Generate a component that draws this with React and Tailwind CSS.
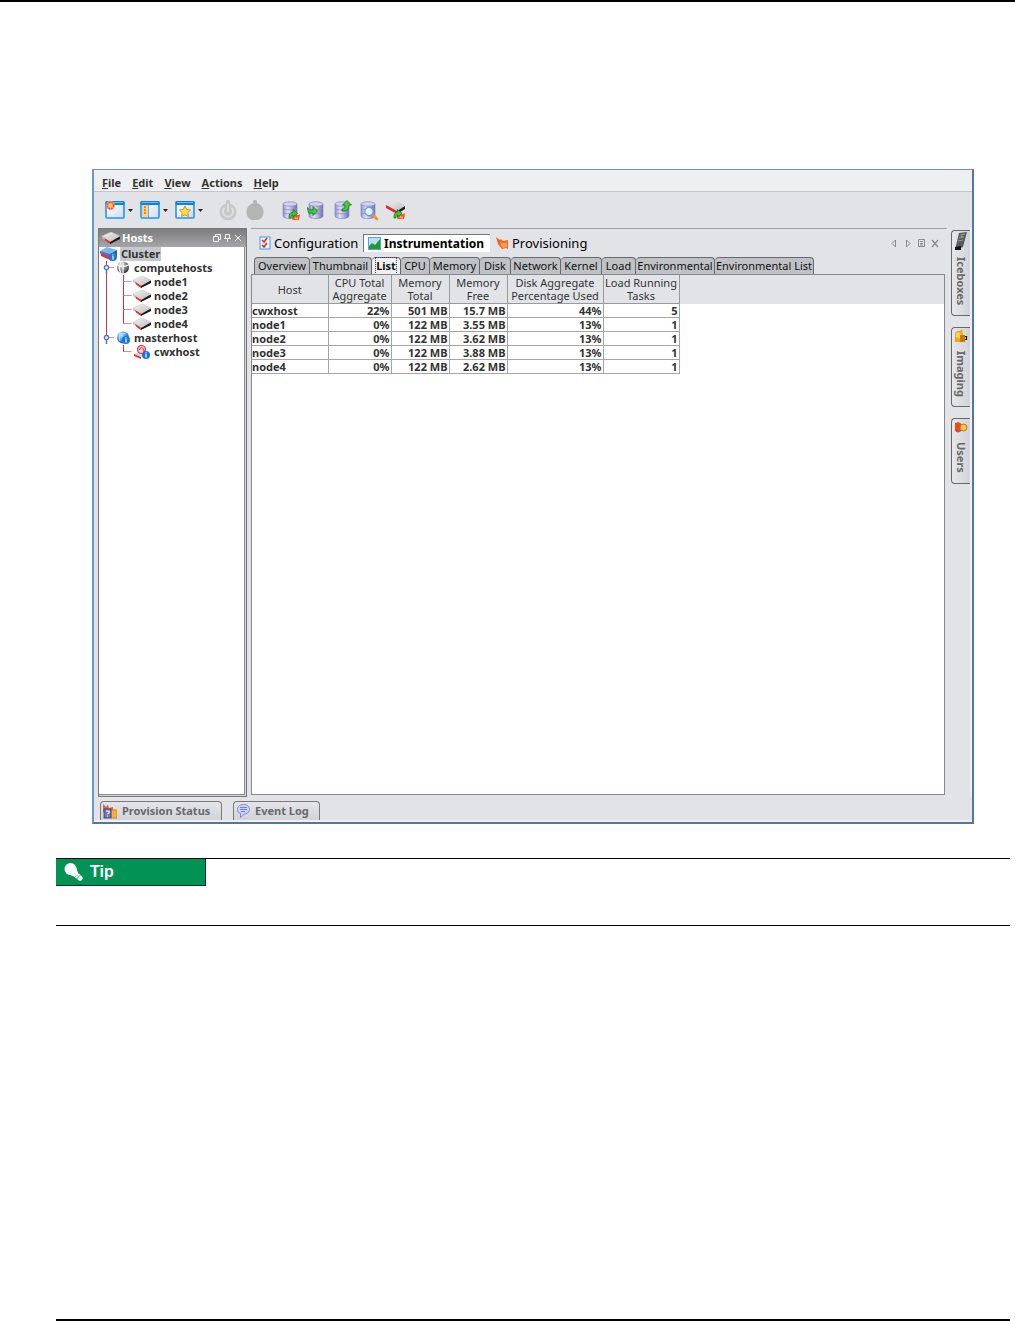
import { useState } from 'react'

const menus = ['File', 'Edit', 'View', 'Actions', 'Help']

const tree = [
  { name: 'computehosts', guides: ['toggle'], icon: 'globe' },
  { name: 'node1', guides: ['line', 'tee'], icon: 'node' },
  { name: 'node2', guides: ['line', 'tee'], icon: 'node' },
  { name: 'node3', guides: ['line', 'tee'], icon: 'node' },
  { name: 'node4', guides: ['line', 'end'], icon: 'node' },
  { name: 'masterhost', guides: ['toggleEnd'], icon: 'globeBlue' },
  { name: 'cwxhost', guides: ['blank', 'end'], icon: 'master' },
]

const subTabs = [
  { label: 'Overview', width: 'w-[56px]' },
  { label: 'Thumbnail', width: 'w-[62px]' },
  { label: 'List', width: 'w-[29px]' },
  { label: 'CPU', width: 'w-[29px]' },
  { label: 'Memory', width: 'w-[50px]' },
  { label: 'Disk', width: 'w-[31px]' },
  { label: 'Network', width: 'w-[50px]' },
  { label: 'Kernel', width: 'w-[41px]' },
  { label: 'Load', width: 'w-[34px]' },
  { label: 'Environmental', width: 'w-[79px]' },
  { label: 'Environmental List', width: 'w-[99px]' },
]

const columns = [
  { lines: ['Host'], width: 'w-[76px]' },
  { lines: ['CPU Total', 'Aggregate'], width: 'w-[63px]' },
  { lines: ['Memory', 'Total'], width: 'w-[58px]' },
  { lines: ['Memory', 'Free'], width: 'w-[58px]' },
  { lines: ['Disk Aggregate', 'Percentage Used'], width: 'w-[96px]' },
  { lines: ['Load Running', 'Tasks'], width: 'w-[76px]' },
]

const rows = [
  ['cwxhost', '22%', '501 MB', '15.7 MB', '44%', '5'],
  ['node1', '0%', '122 MB', '3.55 MB', '13%', '1'],
  ['node2', '0%', '122 MB', '3.62 MB', '13%', '1'],
  ['node3', '0%', '122 MB', '3.88 MB', '13%', '1'],
  ['node4', '0%', '122 MB', '2.62 MB', '13%', '1'],
]

function Gradients() {
  return (
    <svg className="absolute h-0 w-0" aria-hidden="true">
      <defs>
        <linearGradient id="db" x1="0" x2="1" y1="0" y2="0">
          <stop offset="0" stopColor="#8f8fcb" />
          <stop offset="0.35" stopColor="#e2e2fa" />
          <stop offset="1" stopColor="#6c6cae" />
        </linearGradient>
        <linearGradient id="pane" x1="0" x2="1" y1="0" y2="1">
          <stop offset="0" stopColor="#ffffff" />
          <stop offset="1" stopColor="#d3dcf6" />
        </linearGradient>
        <linearGradient id="plate" x1="0" x2="1" y1="0" y2="1">
          <stop offset="0" stopColor="#f4f4f4" />
          <stop offset="1" stopColor="#bcbcbc" />
        </linearGradient>
        <radialGradient id="ball" cx="0.35" cy="0.3" r="0.8">
          <stop offset="0" stopColor="#b8f4ff" />
          <stop offset="0.5" stopColor="#4a90e8" />
          <stop offset="1" stopColor="#3420a8" />
        </radialGradient>
        <radialGradient id="grayBall" cx="0.35" cy="0.3" r="0.8">
          <stop offset="0" stopColor="#e8e8e8" />
          <stop offset="0.5" stopColor="#8c8c8c" />
          <stop offset="1" stopColor="#202020" />
        </radialGradient>
      </defs>
    </svg>
  )
}

function WindowIcon({ kind }) {
  return (
    <svg width="20" height="18" viewBox="0 0 20 18">
      <rect x="1" y="1" width="18" height="16" rx="1" fill="url(#pane)" stroke="#2196f3" strokeWidth="1.6" />
      <rect x="0.5" y="0" width="19" height="4" rx="1" fill="#1280d8" />
      <rect x="2" y="1" width="16" height="1" fill="#6cc0fa" />
      {kind === 'new' && (
        <g>
          <circle cx="5.5" cy="4.5" r="4.5" fill="#f9a070" opacity="0.9" />
          <circle cx="5.5" cy="4.5" r="3.2" fill="none" stroke="#ee4a24" strokeWidth="1.4" strokeDasharray="1.6 1" />
          <circle cx="5.5" cy="4.5" r="2" fill="#ffc24a" />
        </g>
      )}
      {kind === 'side' && (
        <g>
          <rect x="2" y="4" width="6" height="12" fill="#fbd48a" />
          <path d="M8.5 4v12" stroke="#7fa6dc" />
          <path d="M4 6h2M4 9h2M4 12h2" stroke="#e0701c" strokeWidth="1.6" />
        </g>
      )}
      {kind === 'star' && (
        <path d="M10 5l1.800 3.500 3.800.5-2.800 2.700.7 3.800-3.500-1.800-3.500 1.800.7-3.800L4.400 9l3.800-.5z" fill="#ffe046" stroke="#c09018" strokeWidth="0.9" />
      )}
    </svg>
  )
}

function PowerIcon() {
  return (
    <svg width="18" height="21" viewBox="0 0 18 21">
      <circle cx="9" cy="12" r="8.5" fill="#c8c8c9" />
      <rect x="7" y="0" width="4" height="6" rx="1.5" fill="#c8c8c9" />
      <path d="M5.5 8a5 5 0 1 0 7 0" fill="none" stroke="#dfe0e2" strokeWidth="1.8" />
      <path d="M9 4v8" stroke="#e4e4e6" strokeWidth="1.8" />
    </svg>
  )
}

function HaltIcon() {
  return (
    <svg width="18" height="21" viewBox="0 0 18 21">
      <rect x="7" y="0" width="4" height="6" rx="1.5" fill="#b4b4b4" />
      <path d="M9 3c5 0 8.500 4 8.500 9 0 4-2.500 8-6 8h-5c-3.500 0-6-4-6-8 0-5 3.500-9 8.500-9z" fill="#b4b4b4" />
      <path d="M6.500 4.500c2 1 3 1 5 0" fill="none" stroke="#a6a6a6" />
    </svg>
  )
}

function Flame({ x, y }) {
  return (
    <g transform={`translate(${x} ${y})`}>
      <path d="M0 6L1 2l2 1 1-3 1.500 2.500L8 1 7 7H1z" fill="#f0502a" />
      <path d="M2 6l1.500-2.500L5 5l1-1v2.500z" fill="#ffb03c" />
    </g>
  )
}

function DbIcon({ kind }) {
  return (
    <svg width="20" height="21" viewBox="0 0 20 21">
      <path d="M2 4v12c0 3.500 14 3.500 14 0V4z" fill="url(#db)" stroke="#8080bc" strokeWidth="0.6" />
      <ellipse cx="9" cy="4" rx="7" ry="2.200" fill="#d4d4f2" stroke="#8c8cc4" strokeWidth="0.800" />
      <path d="M2 8c0 2.500 14 2.500 14 0M2 12c0 2.500 14 2.500 14 0" fill="none" stroke="#8c8cc4" strokeWidth="0.800" />
      {kind === 'restore' && (
        <g>
          <Flame x={11} y={13} />
          <path d="M8 18c0-4 1-5.500 4-5.500V9.500l4.500 4-4.500 3.500v-2c-1.500 0-2 1-2 3z" fill="#3ccb3c" stroke="#127a12" strokeWidth="0.800" />
        </g>
      )}
      {kind === 'in' && (
        <path d="M.5 7.500l2 2.500H6V6.500l4.500 4.500L6 15.500V13H1.500z" fill="#46d038" stroke="#14801a" strokeWidth="0.900" />
      )}
      {kind === 'out' && (
        <path d="M9 11V9c3 0 3-1 3-4H9.500l4.500-4.500L18.500 5H16c0 4-2 6-7 6z" fill="#46d038" stroke="#14801a" strokeWidth="0.900" />
      )}
      {kind === 'find' && (
        <g>
          <path d="M13 14l5 5" stroke="#f0913a" strokeWidth="2.800" strokeLinecap="round" />
          <circle cx="10" cy="11.500" r="4.200" fill="#d4f2ff" stroke="#6e9cc4" strokeWidth="1.200" />
          <path d="M8 11c0-1 1-2 2-2" stroke="#fff" fill="none" />
        </g>
      )}
    </svg>
  )
}

function NodeIcon() {
  return (
    <svg width="19" height="12" viewBox="0 0 19 12">
      <path d="M0 4l8 6v2L0 6z" fill="#b8c4c8" />
      <path d="M2.500 6l5.500 3.500V12L3 8.500z" fill="#e03434" />
      <path d="M8 9.500L18 4v3l-10 5z" fill="#1a1a1a" />
      <path d="M0 4l9-4 9 4-9.500 5.500z" fill="url(#plate)" stroke="#c4c4c4" strokeWidth="0.5" />
    </svg>
  )
}

function RestoreNodeIcon() {
  return (
    <svg width="21" height="21" viewBox="0 0 21 21">
      <path d="M1 6l9-6 10 5-8 6z" fill="url(#plate)" />
      <path d="M1 5l11 6v3L1 8z" fill="#e02832" />
      <path d="M12 11l8-5v3l-8 5z" fill="#222" />
      <Flame x={12} y={12} />
      <path d="M9 18c0-4 1-6 3.500-6V9.500l4.500 4-4.500 3.500v-2c-1.500 0-1.500 1-1.500 3z" fill="#3ccb3c" stroke="#127a12" strokeWidth="0.800" />
    </svg>
  )
}

function InfoDot({ cx, cy }) {
  return (
    <g>
      <circle cx={cx} cy={cy} r="4" fill="#1478e0" />
      <path d={`M${cx} ${cy - 1}v3.500M${cx} ${cy - 2.8}v1.200`} stroke="#fff" strokeWidth="1.200" />
    </g>
  )
}

function TreeIcon({ kind }) {
  if (kind === 'node') return <NodeIcon />
  if (kind === 'cluster') {
    return (
      <svg width="18" height="14" viewBox="0 0 18 14">
        <path d="M0 4l7-4 10 3-7 4z" fill="#78b8ec" />
        <path d="M0 4l10 3v6L1 9z" fill="#d83a3a" />
        <path d="M0 4l10 3v2L0 6z" fill="#3c80d0" />
        <path d="M10 7l7-4v6l-7 5z" fill="#1d5cae" />
        <InfoDot cx={13} cy={10} />
      </svg>
    )
  }
  if (kind === 'master') {
    return (
      <svg width="19" height="14" viewBox="0 0 19 14">
        <path d="M1 9l6-3 8 2-6 4z" fill="#d8d8d8" />
        <path d="M1 9l7 3v2l-7-3z" fill="#d83030" />
        <circle cx="8.500" cy="4.500" r="4" fill="#f8d0d8" stroke="#d83048" strokeWidth="1.200" />
        <path d="M6.500 5a2 2 0 1 1 3.500 1c1 1 2 0 2-1" fill="none" stroke="#d83048" />
        <InfoDot cx={13} cy={10} />
      </svg>
    )
  }
  const blue = kind === 'globeBlue'
  return (
    <svg width="16" height="14" viewBox="0 0 16 14">
      <circle cx="7" cy="6.500" r="6" fill={blue ? 'url(#ball)' : 'url(#grayBall)'} />
      {!blue && <path d="M7 0v13M1.500 4c3 2 7 2 11 0M5 1c-2 4-2 8 0 11" fill="none" stroke="#f4f4f4" strokeWidth="1.300" />}
      {blue && <path d="M4 2c2 1 5 1 7-.5M4 2c-1 3-1 5 0 8" fill="none" stroke="#b8e4ff" />}
      {blue && <InfoDot cx={10} cy={9} />}
    </svg>
  )
}

function Guide({ kind }) {
  const toggle = kind === 'toggle' || kind === 'toggleEnd'
  const bottom = kind === 'end' ? 7 : 14
  return (
    <svg className="shrink-0" width="17" height="14" viewBox="0 0 17 14">
      {(kind === 'line' || kind === 'toggle') && <path d="M7.500 0v14" stroke="#dc3040" />}
      {kind === 'toggleEnd' && <path d="M7.500 0v7" stroke="#dc3040" />}
      {(kind === 'tee' || kind === 'end') && (
        <g>
          <path d={`M7.500 0v${bottom}`} stroke="#dc3040" />
          <path d="M7.500 6.500h8" stroke="#e88890" />
        </g>
      )}
      {toggle && (
        <g>
          <path d="M9 6.500h6" stroke="#e88890" />
          <path d="M7.500 8v5" stroke="#4f78ac" strokeWidth="1.500" />
          <circle cx="7.500" cy="6.500" r="2.200" fill="#dceafc" stroke="#4f78ac" strokeWidth="1.200" />
        </g>
      )}
    </svg>
  )
}

function MenuLabel({ text }) {
  return (
    <>
      <span className="underline">{text[0]}</span>
      {text.slice(1)}
    </>
  )
}

function Caret() {
  return (
    <button aria-label="More" className="w-[15px] pl-[3px]">
      <svg width="5" height="3" viewBox="0 0 5 3">
        <path d="M0 0h5L2.500 3z" fill="#222" />
      </svg>
    </button>
  )
}

function Toolbar() {
  return (
    <div className="flex h-[37px] items-center border-t border-[#c4c6ca] bg-[#e2e3e7] pl-[11px]">
      <button aria-label="New"><WindowIcon kind="new" /></button>
      <Caret />
      <button aria-label="Layout"><WindowIcon kind="side" /></button>
      <Caret />
      <button aria-label="Favorites"><WindowIcon kind="star" /></button>
      <Caret />
      <div className="flex gap-[9px] pl-[9px]">
        <button aria-label="Power" disabled><PowerIcon /></button>
        <button aria-label="Halt" disabled><HaltIcon /></button>
      </div>
      <div className="flex gap-[6px] pl-[17px]">
        <button aria-label="Restore image"><DbIcon kind="restore" /></button>
        <button aria-label="Import image"><DbIcon kind="in" /></button>
        <button aria-label="Export image"><DbIcon kind="out" /></button>
        <button aria-label="Find image"><DbIcon kind="find" /></button>
        <button aria-label="Restore node"><RestoreNodeIcon /></button>
      </div>
    </div>
  )
}

function HostsPanel() {
  const [selected, setSelected] = useState('Cluster')

  return (
    <aside className="flex w-[149px] shrink-0 flex-col border border-[#77777a] bg-[#d4d5d8]">
      <header className="flex h-[18px] items-center bg-linear-to-b from-[#7c7c7e] to-[#a6a6a8] pl-[3px] text-white">
        <NodeIcon />
        <h2 className="pl-px text-[11px] leading-[14px] font-bold">Hosts</h2>
        <svg className="mr-[4px] ml-auto" width="29" height="9" viewBox="0 0 29 9" fill="none" stroke="#f0f0f0">
          <path d="M2.500 2.500v-2h5v5h-2M.5 2.500h5v5h-5z" />
          <path d="M12.500 .5v4M16.500 .5v4M12.500 .5h4M11 4.500h7M14.500 5v3" />
          <path d="M22 1l6 6M28 1l-6 6" />
        </svg>
      </header>
      <ul className="mr-px mb-px flex-1 border-r border-b border-[#8c8c90] bg-white text-[11px] leading-[14px] font-bold text-[#333]">
        <li>
          <button onClick={() => setSelected('Cluster')} className="flex h-[14px] items-center pl-px">
            <TreeIcon kind="cluster" />
            <span className={`ml-[2px] px-px ${selected === 'Cluster' ? 'bg-[#c6c8cb]' : ''}`}>Cluster</span>
          </button>
        </li>
        {tree.map((item) => (
          <li key={item.name}>
            <button onClick={() => setSelected(item.name)} className="flex h-[14px] items-center">
              {item.guides.map((kind, i) => (
                <Guide key={i} kind={kind} />
              ))}
              <TreeIcon kind={item.icon} />
              <span className={`pl-[2px] ${selected === item.name ? 'bg-[#c6c8cb]' : ''}`}>{item.name}</span>
            </button>
          </li>
        ))}
      </ul>
    </aside>
  )
}

function ViewTabs() {
  return (
    <div className="flex h-[29px] items-center border-t border-[#a2a2a6] pl-[8px] text-[13px] leading-[18px] text-black">
      <button className="flex w-[104px] items-center gap-[3px]">
        <svg width="12" height="14" viewBox="0 0 12 14">
          <rect x="1" y="1" width="10" height="12" fill="#e8f4ff" stroke="#4a9ee0" />
          <path d="M3 4l2 2 3-4M3 9l2 2 3-4" fill="none" stroke="#e02c2c" strokeWidth="1.600" />
        </svg>
        Configuration
      </button>
      <button className="flex h-[18px] w-[127px] items-center gap-[3px] border-t border-l border-[#77777a] bg-white pl-1 text-[12px] font-bold">
        <svg width="13" height="13" viewBox="0 0 13 13">
          <rect x="0.500" y="0.500" width="12" height="12" fill="#bcdcfa" stroke="#58a0e4" />
          <path d="M1 9l3-3 3 2 5-6v10H1z" fill="#1f9c28" />
        </svg>
        Instrumentation
      </button>
      <button className="flex items-center gap-[3px] pl-[6px]">
        <svg width="13" height="13" viewBox="0 0 13 13">
          <path d="M0 0l4 3 1-1 2 2 5-1v9l-2-1-4 1-4-5z" fill="#f4622c" />
          <path d="M4 5l4 1 3-1v5l-4 1-2-2z" fill="#ffa03c" />
        </svg>
        Provisioning
      </button>
      <svg className="mr-[8px] ml-auto" width="48" height="9" viewBox="0 0 48 9" fill="none" stroke="#8a8a8e">
        <path d="M4.500 1v7L1 4.500zM15.500 1v7L19 4.500z" />
        <path d="M27.500 .5h6v7h-6zM29 2.500h3M29 4.500h3M29 6h3" />
        <path d="M41 1l6 7M47 1l-6 7" strokeWidth="1.300" />
      </svg>
    </div>
  )
}

function SubTabs() {
  const [active, setActive] = useState('List')

  return (
    <div role="tablist" className="flex h-[17px] pl-[3px] text-[11px] leading-[15px] text-[#111]">
      {subTabs.map((tab) => (
        <button
          key={tab.label}
          role="tab"
          aria-selected={active === tab.label}
          onClick={() => setActive(tab.label)}
          className={`${tab.width} flex shrink-0 justify-center rounded-t-sm border-t border-r border-[#66686b] whitespace-nowrap first:border-l ${
            active === tab.label ? 'bg-[#eeeff2] font-bold' : 'bg-[#bfc2c5]'
          }`}
        >
          <span className={active === tab.label ? 'outline-1 outline-dotted outline-[#444]' : ''}>{tab.label}</span>
        </button>
      ))}
    </div>
  )
}

function HostTable() {
  return (
    <div className="mr-[2px] flex-1 border border-[#88888c] bg-white">
      {/* header colour runs on past the last column */}
      <div className="bg-linear-to-b from-[#e2e3e7] from-[29px] to-white to-[29px]">
        <table className="table-fixed border-collapse text-[11px] text-[#333]">
          <thead>
            <tr className="h-[28px] leading-[13px]">
              {columns.map((col) => (
                <th key={col.lines.join(' ')} className={`${col.width} border-r border-b border-[#9a9a9e] p-0 pt-px font-normal whitespace-nowrap`}>
                  {col.lines.map((line) => (
                    <div key={line}>{line}</div>
                  ))}
                </th>
              ))}
            </tr>
          </thead>
          <tbody className="bg-white">
            {rows.map((row) => (
              <tr key={row[0]} className="h-[14px] leading-[13px] font-bold">
                {row.map((cell, i) => (
                  <td key={i} className={`border-r border-b border-[#a6a6aa] p-0 ${i === 0 ? 'text-left' : 'pr-px text-right'}`}>
                    {cell}
                  </td>
                ))}
              </tr>
            ))}
          </tbody>
        </table>
      </div>
    </div>
  )
}

function SideTab({ label, height, children }) {
  return (
    <button
      className={`${height} flex w-[19px] flex-col items-center gap-[6px] rounded-l-sm border-y border-l border-[#66686b] bg-linear-to-r from-[#e6e7ea] to-[#d2d3d8] text-[11px] leading-[16px] font-bold text-[#66686b]`}
    >
      {children}
      <span className="[writing-mode:vertical-rl]">{label}</span>
    </button>
  )
}

function SideTabs() {
  return (
    <nav className="flex w-[19px] shrink-0 flex-col gap-[11px] pt-[2px]">
      <SideTab label="Iceboxes" height="h-[86px]">
        <svg className="shrink-0" width="14" height="20" viewBox="0 0 14 20">
          <path d="M5 2l8-1-4 15-8 3z" fill="#5a5a5e" />
          <path d="M1 16l6-1v4H1z" fill="#111" />
          <path d="M6 4l5-1M5 7l5-1M4 10l5-1" stroke="#9a9a9e" />
          <path d="M7 6l2-1" stroke="#4cd04c" strokeWidth="1.500" />
        </svg>
      </SideTab>
      <SideTab label="Imaging" height="h-[80px]">
        <svg className="shrink-0" width="14" height="17" viewBox="0 0 14 17">
          <path d="M1 5l2-2h3l2-2 1 5v8H1z" fill="#f2a51c" />
          <path d="M2 5l2-1 3 2 1 2-3 3-3-2z" fill="#ffd448" />
          <path d="M6 7h5v7H6z" fill="#c47c08" />
          <path d="M11 8.500h1.500v3H11" fill="none" stroke="#111" strokeWidth="1.200" />
        </svg>
      </SideTab>
      <SideTab label="Users" height="h-[66px]">
        <svg className="shrink-0" width="14" height="17" viewBox="0 0 14 17">
          <path d="M1 4c4-2 6 0 7 2v5c-2 3-5 3-7 1z" fill="#e0501c" />
          <circle cx="9.500" cy="8.500" r="3.500" fill="#fac050" stroke="#c07818" />
        </svg>
      </SideTab>
    </nav>
  )
}

function StatusTabs() {
  const tab =
    'flex h-[19px] items-center rounded-t-sm border-t border-x border-[#77797c] bg-linear-to-b from-[#e4e5e8] to-[#d2d3d7] text-[11px] leading-[14px] font-bold text-[#66686b]'
  return (
    <footer className="flex items-end gap-[11px] border-b-2 border-[#f0f0f0] pt-[4px] pl-[6px]">
      <button className={`${tab} w-[122px] gap-[5px] pl-[2px]`}>
        <svg width="14" height="15" viewBox="0 0 14 15">
          <path d="M0 0l3 3 2-2 1 3 4-1v5H0z" fill="#f0602c" />
          <path d="M8 6h6v8H8z" fill="#f8b42c" stroke="#e06c1c" strokeWidth="0.800" />
          <rect x="1" y="5" width="7" height="9" fill="#6c78b8" stroke="#303c80" strokeWidth="0.800" />
          <path d="M3 7h3v2L4.500 10M4.500 11.500v1" fill="none" stroke="#fff" strokeWidth="1.200" />
        </svg>
        Provision Status
      </button>
      <button className={`${tab} w-[87px] gap-[5px] pl-[3px]`}>
        <svg width="13" height="14" viewBox="0 0 13 14">
          <path d="M6.500 .5c8 0 8 9 1 9.500L3.500 13.500V9.500C-1.500 8-.500 .5 6.500 .5z" fill="#ccd0f8" stroke="#8488cc" />
          <path d="M3 3.500h7M3 5.500h7M4 7.500h4" stroke="#7478c0" strokeWidth="0.900" />
        </svg>
        Event Log
      </button>
    </footer>
  )
}

export default function App() {
  return (
    <div className="flex min-h-screen flex-col border-t-2 border-black bg-white font-['Noto_Sans',sans-serif]">
      <Gradients />
      <section className="mt-[167px] mr-[41px] ml-[92px] border-t border-r-2 border-b-2 border-l-2 border-t-[#7890a8] border-r-[#5674a4] border-b-[#5674a4] border-l-[#6c96cc] bg-[#e2e3e7]">
        <nav className="flex h-[21px] items-center gap-[11px] bg-[#eeeff0] pt-[4px] pl-2 text-[11px] leading-[14px] font-bold text-[#333]">
          {menus.map((item) => (
            <button key={item}><MenuLabel text={item} /></button>
          ))}
        </nav>
        <Toolbar />
        <main className="flex min-h-[569px] gap-[4px] border-r-2 border-[#f0f0f0] pl-[4px]">
          <HostsPanel />
          <div className="flex min-w-0 flex-1 flex-col pb-[2px]">
            <ViewTabs />
            <SubTabs />
            <HostTable />
          </div>
          <SideTabs />
        </main>
        <StatusTabs />
      </section>

      <section className="mt-[34px] mr-[5px] ml-[56px] min-h-[68px] border-y border-black">
        <h3 className="flex h-[27px] w-[150px] items-center gap-[6px] border-r border-b border-[#04301c] bg-[#009355] pl-2 font-['Liberation_Sans',sans-serif] text-[16px] leading-[20px] font-bold text-white">
          <svg width="20" height="20" viewBox="0 0 20 20" fill="#fff">
            <circle cx="6.500" cy="7" r="6" />
            <path d="M11.500 4L14.500 12l-3.500 3L3.500 12z" />
            <path d="M11 15.500l4-4 3.500 3.500c1 2-1.500 4.500-3.500 3.500z" />
            <path d="M12.500 17l4-4" stroke="#009355" strokeWidth="0.800" />
          </svg>
          Tip
        </h3>
      </section>
      <div className="mt-auto mr-[5px] ml-[56px] border-b-2 border-black" />
    </div>
  )
}
